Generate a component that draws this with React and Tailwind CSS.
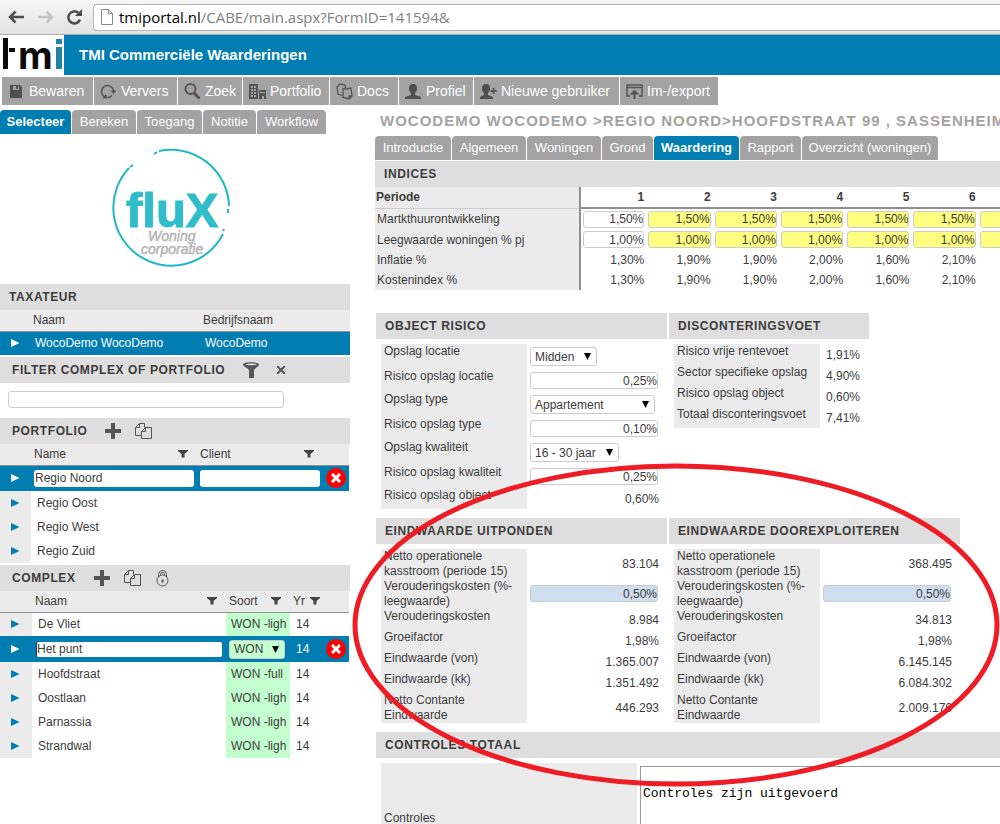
import React, { useState } from 'react';

const toolbarItems = [
  { label: 'Bewaren', icon: 'save', width: 'w-[91px]' },
  { label: 'Ververs', icon: 'refresh', width: 'w-[83px]' },
  { label: 'Zoek', icon: 'search', width: 'w-[64px]' },
  { label: 'Portfolio', icon: 'building', width: 'w-[86px]' },
  { label: 'Docs', icon: 'docs', width: 'w-[68px]' },
  { label: 'Profiel', icon: 'user', width: 'w-[74px]' },
  { label: 'Nieuwe gebruiker', icon: 'userAdd', width: 'w-[145px]' },
  { label: 'Im-/export', icon: 'export', width: 'w-[98px]' },
];

const leftTabs = [
  { label: 'Selecteer', width: 'w-[71px]' },
  { label: 'Bereken', width: 'w-[64px]' },
  { label: 'Toegang', width: 'w-[65px]' },
  { label: 'Notitie', width: 'w-[53px]' },
  { label: 'Workflow', width: 'w-[69px]' },
];

const mainTabs = [
  { label: 'Introductie', width: 'w-[76px]' },
  { label: 'Algemeen', width: 'w-[74px]' },
  { label: 'Woningen', width: 'w-[74px]' },
  { label: 'Grond', width: 'w-[51px]' },
  { label: 'Waardering', width: 'w-[85px]' },
  { label: 'Rapport', width: 'w-[61px]' },
  { label: 'Overzicht (woningen)', width: 'w-[136px]' },
];

const indices = [
  { label: 'Martkthuurontwikkeling', editable: true, values: ['1,50%', '1,50%', '1,50%', '1,50%', '1,50%', '1,50%', ''] },
  { label: 'Leegwaarde woningen % pj', editable: true, values: ['1,00%', '1,00%', '1,00%', '1,00%', '1,00%', '1,00%', ''] },
  { label: 'Inflatie %', values: ['1,30%', '1,90%', '1,90%', '2,00%', '1,60%', '2,10%', ''] },
  { label: 'Kostenindex %', values: ['1,30%', '1,90%', '1,90%', '2,00%', '1,60%', '2,10%', ''] },
];

const complexes = [
  { name: 'De Vliet', soort: 'WON -ligh' },
  { name: 'Het punt', soort: 'WON', selected: true },
  { name: 'Hoofdstraat', soort: 'WON -full' },
  { name: 'Oostlaan', soort: 'WON -ligh' },
  { name: 'Parnassia', soort: 'WON -ligh' },
  { name: 'Strandwal', soort: 'WON -ligh' },
];

const disconto = [
  ['Risico vrije rentevoet', '1,91%'],
  ['Sector specifieke opslag', '4,90%'],
  ['Risico opslag object', '0,60%'],
  ['Totaal disconteringsvoet', '7,41%'],
];

const uitponden = ['83.104', '0,50%', '8.984', '1,98%', '1.365.007', '1.351.492', '446.293'];
const doorexploiteren = ['368.495', '0,50%', '34.813', '1,98%', '6.145.145', '6.084.302', '2.009.176'];
const eindwaardeLabels = [
  'Netto operationele kasstroom (periode 15)',
  'Verouderingskosten (%-leegwaarde)',
  'Verouderingskosten',
  'Groeifactor',
  'Eindwaarde (von)',
  'Eindwaarde (kk)',
  'Netto Contante Eindwaarde',
];

const ToolIcon = ({ name }) => (
  <svg width="18" height="18" viewBox="0 0 18 18" fill="none" stroke="#555" strokeWidth="1.5" className="shrink-0" aria-hidden="true">
    {name === 'save' && (
      <g stroke="none">
        <path d="M3 3h10l2 2v11H3z" fill="#4f4f4f" />
        <path d="M6 4h6v4H6z" fill="#a3a3a3" />
        <path d="M9 4h2v3H9z" fill="#4f4f4f" />
      </g>
    )}
    {name === 'refresh' && (
      <g>
        <path d="M6 15A6 6 0 1 1 14.500 9M8.500 15.500A6 6 0 0 0 13 13.500" />
        <path d="M11.500 8.500h6L14.500 12zM3.500 16.500h5L7 12z" fill="#555" stroke="none" />
      </g>
    )}
    {name === 'search' && (
      <g>
        <circle cx="7.500" cy="7" r="5" strokeWidth="2" />
        <path d="M11 11l5.500 5.500" strokeWidth="3" />
      </g>
    )}
    {name === 'building' && (
      <g stroke="none">
        <path d="M1 2h9v15H1zM11 8h7v9h-2v-3h-2v3h-3z" fill="#555" />
        <path d="M3 4h2v2H3zM6 4h2v2H6zM3 7h2v2H3zM6 7h2v2H6zM3 10h2v2H3zM6 10h2v2H6zM3 13h2v2H3zM6 13h2v2H6zM12 10h5v1h-5z" fill="#a3a3a3" />
      </g>
    )}
    {name === 'docs' && (
      <g strokeWidth="1.300">
        <path d="M7.500 13.500L3 12 2 5l3-3 5 1 .5 3" />
        <path d="M8 6.500l3 .5 5-1 1 8-3 3-6-1.500zM14 17v-3h3" />
      </g>
    )}
    {name === 'user' && (
      <path d="M9 2c3 0 4 2 4 4.500 0 2-1 3.500-2 4.500v2l6 2v2H1v-2l6-2v-2c-1-1-2-2.500-2-4.500C5 4 6 2 9 2z" fill="#4f4f4f" stroke="none" />
    )}
    {name === 'userAdd' && (
      <g>
        <path d="M7 2c3 0 4 2 4 4.500 0 2-1 3.500-2 4.500v2l5 2v2H1v-2l4-2v-2c-1-1-2-2.500-2-4.500C3 4 4 2 7 2z" fill="#4f4f4f" stroke="none" />
        <path d="M14.500 6v6M11.500 9h6" strokeWidth="2" />
      </g>
    )}
    {name === 'export' && (
      <g>
        <path d="M5 14H2V3h15v11h-3M2 5.500h15" />
        <path d="M9.500 17v-8M7 11.500L9.500 9l2.500 2.500z" strokeWidth="2" />
      </g>
    )}
  </svg>
);

const Triangle = ({ selected }) => (
  <svg width="9" height="8" viewBox="0 0 9 8" aria-hidden="true" className={`ml-[11px] ${selected ? 'text-white' : 'text-[#007db1]'}`}>
    <path d="M0 0l8.500 4L0 8z" fill="currentColor" />
  </svg>
);

const FilterGlyph = () => (
  <svg width="10" height="8" viewBox="0 0 10 8" aria-hidden="true">
    <path d="M0 0h10v1L6.500 4v3.500h-3V4L0 1z" fill="#444" />
  </svg>
);

const PlusIcon = () => (
  <svg width="16" height="16" viewBox="0 0 16 16" aria-hidden="true">
    <path d="M6 0h4v6h6v4h-6v6H6v-6H0V6h6z" fill="#555" />
  </svg>
);

const CopyIcon = () => (
  <svg width="17" height="17" viewBox="0 0 17 17" fill="none" stroke="#555" aria-hidden="true">
    <path d="M6.500 12.500h-6v-8l4-4h5v4M4.500 .5v4h-4" />
    <path d="M10.500 4.500h6v11h-10v-7zM10.500 4.500v4h-4" />
  </svg>
);

const LockIcon = () => (
  <svg width="13" height="17" viewBox="0 0 13 17" fill="none" stroke="#555" aria-hidden="true">
    <circle cx="6.500" cy="10.500" r="5.500" />
    <path d="M2.500 7V4.500a4 4 0 0 1 8 0V7M4.500 5.500v-1a2 2 0 0 1 4 0v1" />
    <path d="M6.500 9.500v3" strokeWidth="2" />
  </svg>
);

const DeleteButton = ({ label }) => (
  <button type="button" aria-label={label} className="flex size-5 items-center justify-center rounded-full bg-[#ff0000]">
    <svg width="10" height="10" viewBox="0 0 10 10" stroke="#fff" strokeWidth="3" aria-hidden="true">
      <path d="M1 1l8 8M9 1L1 9" />
    </svg>
  </button>
);

const Heading = ({ children, className = 'pl-[9px]' }) => (
  <h2 className={`flex h-[26px] items-center bg-[#dedede] text-xs font-bold uppercase tracking-wider text-[#3c3c3c] ${className}`}>
    {children}
  </h2>
);

const Tabs = ({ items, active, onSelect }) => (
  <div role="tablist" className="flex gap-px">
    {items.map(tab => (
      <button
        key={tab.label}
        type="button"
        role="tab"
        aria-selected={active === tab.label}
        onClick={() => onSelect(tab.label)}
        className={`h-6 shrink-0 whitespace-nowrap rounded-t text-center text-[13px] text-white ${tab.width} ${active === tab.label ? 'bg-[#007db1] font-bold' : 'bg-[#a3a3a3]'}`}
      >
        {tab.label}
      </button>
    ))}
  </div>
);

const SelectBox = ({ id, label, value, width, options, className = 'bg-white' }) => (
  <div className={`relative ${width}`}>
    <select
      id={id}
      aria-label={label}
      defaultValue={value}
      className={`block h-[19px] w-full appearance-none rounded-[3px] border border-[#ccc] pl-1 text-xs leading-4 ${className}`}
    >
      {options.map(o => <option key={o}>{o}</option>)}
    </select>
    <svg width="7" height="7" viewBox="0 0 7 7" className="pointer-events-none absolute right-[6px] top-[6px]" aria-hidden="true">
      <path d="M0 0h7L3.500 7z" fill="#000" />
    </svg>
  </div>
);

const PercentInput = ({ id, value, className = 'bg-white' }) => (
  <input id={id} defaultValue={value} className={`block h-[17px] w-32 rounded-[3px] border border-[#ccc] text-right text-xs ${className}`} />
);

const Row = ({ id, label, height, children }) => (
  <div className={`flex ${height}`}>
    <label htmlFor={id} className="w-[146px] shrink-0 bg-[#ebebeb] pl-[3px] leading-[15px]">{label}</label>
    {children}
  </div>
);

const BrowserBar = () => (
  <div className="flex h-[35px] items-center border-b border-[#aaa] bg-gradient-to-b from-[#f7f7f7] to-[#e2e2e2]">
    <button type="button" aria-label="Back" className="ml-2">
      <svg width="17" height="14" viewBox="0 0 17 14" fill="none" stroke="#4d4d4d" strokeWidth="2.500">
        <path d="M2 7h14M7.500 1.500L2 7l5.500 5.500" />
      </svg>
    </button>
    <button type="button" aria-label="Forward" className="ml-3">
      <svg width="17" height="14" viewBox="0 0 17 14" fill="none" stroke="#c3c3c3" strokeWidth="2.500">
        <path d="M1 7h14M9.500 1.500L15 7l-5.500 5.500" />
      </svg>
    </button>
    <button type="button" aria-label="Reload" className="ml-3">
      <svg width="17" height="16" viewBox="0 0 17 16" fill="none" stroke="#4d4d4d" strokeWidth="2.500">
        <path d="M14 10.500A6 6 0 1 1 12.500 4" />
        <path d="M16 0v7H9z" fill="#4d4d4d" stroke="none" />
      </svg>
    </button>
    <div className="ml-[10px] flex h-[27px] flex-1 items-center rounded-l border border-r-0 border-[#b5b5b5] bg-white pl-[7px] font-['Open_Sans',sans-serif] text-[15px]">
      <svg width="12" height="16" viewBox="0 0 12 16" fill="none" stroke="#888" aria-hidden="true">
        <path d="M.5 .5h7l4 4v11H.5zM7.500 .5v4h4" />
      </svg>
      <span className="ml-[6px] text-black">tmiportal.nl</span>
      <span className="text-[#808080]">/CABE/main.aspx?FormID=141594&amp;</span>
    </div>
  </div>
);

const TmiLogo = () => (
  <svg width="64" height="40" viewBox="0 0 64 40" className="shrink-0 bg-white" role="img" aria-label="tmi">
    <path d="M3 3h5v31H3zM9 13h6v4H9z" fill="#0a0a0a" />
    <text x="18" y="34" fontFamily="Inter, sans-serif" fontSize="38" fontWeight="700" fill="#0a0a0a">m</text>
    <path d="M56 4h6v5h-6zM56 12h6v22h-6z" fill="#2181a6" />
  </svg>
);

const FluxLogo = () => (
  <svg width="120" height="120" viewBox="0 0 120 120" role="img" aria-label="fluX Woningcorporatie" className="mt-[14px]">
    <g fill="none" stroke="#22b8c6" strokeWidth="2">
      <path d="M48 3A58 58 0 0 1 118 58" />
      <path d="M112 86A58 58 0 1 1 18 20" />
      <path d="M43 6l3-2M19 19l3-2M117 61v4M112 83l1-2" />
    </g>
    <text x="15" y="79" fontFamily="Liberation Sans, sans-serif" fontSize="49" fontWeight="700" fill="#30bdc9" stroke="#30bdc9" strokeWidth="1">fluX</text>
    <g fontFamily="Liberation Sans, sans-serif" fontSize="14" fontStyle="italic" fill="#b5b5b5" stroke="#b5b5b5" strokeWidth=".5">
      <text x="37" y="93">Woning</text>
      <text x="30" y="106">corporatie</text>
    </g>
  </svg>
);

const Eindwaarde = ({ title, prefix, values }) => (
  <section className="w-[291px]">
    <Heading>{title}</Heading>
    <div className="pl-[5px] pt-[5px]">
      {eindwaardeLabels.map((label, i) => (
        <Row key={label} id={`${prefix}-${i}`} label={label} height={i < 2 || i === 6 ? 'h-[30px]' : 'h-[21px]'}>
          {i === 1 ? (
            <div className="pl-[3px] pt-[6px]"><PercentInput id={`${prefix}-${i}`} value={values[i]} className="bg-[#cfdeef]" /></div>
          ) : (
            <output id={`${prefix}-${i}`} className="flex flex-1 items-center justify-end pr-2">{values[i]}</output>
          )}
        </Row>
      ))}
    </div>
  </section>
);

const Sidebar = () => {
  const [tab, setTab] = useState('Selecteer');

  return (
    <aside className="w-[350px] shrink-0 pt-[5px]">
      <Tabs items={leftTabs} active={tab} onSelect={setTab} />
      <div className="flex h-[150px] justify-center pr-2"><FluxLogo /></div>

      <Heading>Taxateur</Heading>
      <table className="w-full table-fixed text-left">
        <colgroup><col className="w-[31px]" /><col className="w-[170px]" /><col /></colgroup>
        <thead>
          <tr className="h-[21px] border-b border-[#8f8f8f] bg-[#ebebeb]">
            <th />
            <th className="pl-[2px] font-normal">Naam</th>
            <th className="pl-[2px] font-normal">Bedrijfsnaam</th>
          </tr>
        </thead>
        <tbody>
          <tr className="h-6 bg-[#007db1] text-white">
            <td><Triangle selected /></td>
            <td className="pl-1">WocoDemo WocoDemo</td>
            <td className="pl-1">WocoDemo</td>
          </tr>
        </tbody>
      </table>

      <Heading className="mt-[2px] pl-3">
        <label htmlFor="filter">Filter complex of portfolio</label>
        <button type="button" aria-label="Filter" className="ml-[18px]">
          <svg width="16" height="16" viewBox="0 0 16 16" aria-hidden="true">
            <path d="M0 2.500C0-.5 16-.5 16 2.500c0 2-5 4-5 6V16H6V8.500C6 6.500 0 4.500 0 2.500z" fill="#555" />
            <path d="M2 2.500c2-1.500 10-1.500 12 0-2 1-10 1-12 0z" fill="#dedede" />
          </svg>
        </button>
        <button type="button" aria-label="Clear filter" className="ml-[18px]">
          <svg width="8" height="8" viewBox="0 0 8 8" stroke="#555" strokeWidth="2" aria-hidden="true"><path d="M0 0l8 8M8 0L0 8" /></svg>
        </button>
      </Heading>
      <div className="h-[35px] pl-2 pt-2">
        <input id="filter" className="block h-[17px] w-[276px] rounded-[3px] border border-[#ccc] px-1" />
      </div>

      <Heading className="pl-3">
        Portfolio
        <button type="button" aria-label="Add portfolio" className="ml-[18px]"><PlusIcon /></button>
        <button type="button" aria-label="Copy portfolio" className="ml-[14px]"><CopyIcon /></button>
      </Heading>
      <table className="w-[349px] table-fixed text-left">
        <colgroup><col className="w-[31px]" /><col className="w-[166px]" /><col className="w-[126px]" /><col /></colgroup>
        <thead>
          <tr className="h-[21px] border-b border-[#8f8f8f] bg-[#ebebeb]">
            <th />
            <th className="pl-[3px] font-normal"><div className="flex items-center justify-between pr-[9px]">Name <FilterGlyph /></div></th>
            <th className="pl-[3px] font-normal"><div className="flex items-center justify-between pr-[9px]">Client <FilterGlyph /></div></th>
            <th />
          </tr>
        </thead>
        <tbody>
          <tr className="h-[26px] bg-[#007db1]">
            <td><Triangle selected /></td>
            <td className="pl-[3px]"><input aria-label="Name" defaultValue="Regio Noord" className="block h-[17px] w-40 rounded-[3px] bg-white pl-px" /></td>
            <td className="pl-[3px]"><input aria-label="Client" className="block h-[17px] w-[120px] rounded-[3px] bg-white pl-px" /></td>
            <td className="pl-[3px]"><DeleteButton label="Delete Regio Noord" /></td>
          </tr>
          {['Regio Oost', 'Regio West', 'Regio Zuid'].map(name => (
            <tr key={name} className="h-6">
              <td className="bg-[#ebebeb]"><Triangle /></td>
              <td className="pl-[6px]">{name}</td>
              <td />
              <td />
            </tr>
          ))}
        </tbody>
      </table>

      <Heading className="mt-[2px] pl-3">
        Complex
        <button type="button" aria-label="Add complex" className="ml-[18px]"><PlusIcon /></button>
        <button type="button" aria-label="Copy complex" className="ml-[14px]"><CopyIcon /></button>
        <button type="button" aria-label="Lock complex" className="ml-[15px]"><LockIcon /></button>
      </Heading>
      <table className="w-[349px] table-fixed text-left">
        <colgroup><col className="w-8" /><col className="w-[194px]" /><col className="w-16" /><col className="w-[33px]" /><col /></colgroup>
        <thead>
          <tr className="h-[21px] border-b border-[#8f8f8f] bg-[#ebebeb]">
            <th />
            <th className="pl-[3px] font-normal"><div className="flex items-center justify-between pr-[9px]">Naam <FilterGlyph /></div></th>
            <th className="pl-[3px] font-normal"><div className="flex items-center justify-between pr-[9px]">Soort <FilterGlyph /></div></th>
            <th className="pl-[3px] font-normal"><div className="flex items-center justify-between pr-[3px]">Yr <FilterGlyph /></div></th>
            <th />
          </tr>
        </thead>
        <tbody>
          {complexes.map(c => c.selected ? (
            <tr key={c.name} className="h-[26px] bg-[#007db1] text-white">
              <td><Triangle selected /></td>
              <td className="pl-1"><input aria-label="Naam" defaultValue={c.name} className="block h-[15px] w-[186px] rounded-[2px] border-l border-[#333] bg-white text-[#3c3c3c]" /></td>
              <td className="pl-[3px]"><SelectBox label="Soort" value={c.soort} width="w-14" options={['WON']} className="bg-[#c3ffcf] text-[#3c3c3c]" /></td>
              <td className="pl-[6px]">14</td>
              <td className="pl-[3px]"><DeleteButton label={`Delete ${c.name}`} /></td>
            </tr>
          ) : (
            <tr key={c.name} className="h-6">
              <td className="bg-[#ebebeb]"><Triangle /></td>
              <td className="pl-[6px]">{c.name}</td>
              <td className="whitespace-nowrap bg-[#c3ffcf] pl-[5px]">{c.soort}</td>
              <td className="pl-[6px]">14</td>
              <td />
            </tr>
          ))}
        </tbody>
      </table>
    </aside>
  );
};

const IndicesTable = () => (
  <div className="overflow-hidden">
    <table className="w-[669px] table-fixed">
      <colgroup><col className="w-[205px]" /></colgroup>
      <thead>
        <tr className="h-[21px]">
          <th className="border-b border-r-2 border-b-[#ccc] border-r-[#8f8f8f] bg-[#ebebeb] pl-px text-left">Periode</th>
          {[1, 2, 3, 4, 5, 6].map(n => <th key={n} className="border-b-2 border-[#8f8f8f] pr-[2px] text-right">{n}</th>)}
          <th className="border-b-2 border-[#8f8f8f]" />
        </tr>
      </thead>
      <tbody>
        {indices.map(row => (
          <tr key={row.label} className={row.editable ? 'h-[21px]' : 'h-5'}>
            <th className="border-r-2 border-[#8f8f8f] bg-[#ebebeb] pl-[2px] text-left font-normal">{row.label}</th>
            {row.values.map((value, i) => (
              <td key={i} className={row.editable ? 'px-[2px]' : 'pr-[2px] text-right'}>
                {row.editable ? (
                  <input
                    aria-label={`${row.label} ${i + 1}`}
                    defaultValue={value}
                    className={`block h-[17px] w-full rounded-[3px] border border-[#ccc] text-right ${i === 0 ? 'bg-white' : 'bg-[#ffff80]'}`}
                  />
                ) : value}
              </td>
            ))}
          </tr>
        ))}
      </tbody>
    </table>
  </div>
);

const ObjectRisico = () => (
  <section className="w-[291px]">
    <Heading>Object risico</Heading>
    <div className="pl-[5px] pt-[5px]">
      <Row id="locatie" label="Opslag locatie" height="h-[25px]">
        <div className="pl-[3px] pt-[3px]"><SelectBox id="locatie" value="Midden" width="w-[67px]" options={['Midden']} /></div>
      </Row>
      <Row id="r-locatie" label="Risico opslag locatie" height="h-[23px]">
        <div className="pl-[3px] pt-[3px]"><PercentInput id="r-locatie" value="0,25%" /></div>
      </Row>
      <Row id="type" label="Opslag type" height="h-[25px]">
        <div className="pl-[3px] pt-[3px]"><SelectBox id="type" value="Appartement" width="w-[125px]" options={['Appartement']} /></div>
      </Row>
      <Row id="r-type" label="Risico opslag type" height="h-[23px]">
        <div className="pl-[3px] pt-[3px]"><PercentInput id="r-type" value="0,10%" /></div>
      </Row>
      <Row id="kwaliteit" label="Opslag kwaliteit" height="h-[25px]">
        <div className="pl-[3px] pt-[3px]"><SelectBox id="kwaliteit" value="16 - 30 jaar" width="w-[89px]" options={['16 - 30 jaar']} /></div>
      </Row>
      <Row id="r-kwaliteit" label="Risico opslag kwaliteit" height="h-[23px]">
        <div className="pl-[3px] pt-[3px]"><PercentInput id="r-kwaliteit" value="0,25%" /></div>
      </Row>
      <Row id="r-object" label="Risico opslag object" height="h-[21px]">
        <output id="r-object" className="flex flex-1 items-center justify-end pr-2">0,60%</output>
      </Row>
    </div>
  </section>
);

const App = () => {
  const [tab, setTab] = useState('Waardering');

  return (
    <div className="relative h-screen overflow-hidden bg-white font-['Liberation_Sans',Arial,sans-serif] text-xs text-[#3c3c3c]">
      <BrowserBar />
      <header className="flex h-10 items-center bg-[#007db1]">
        <TmiLogo />
        <h1 className="ml-[15px] text-[15px] font-bold text-white">TMI Commerciële Waarderingen</h1>
      </header>
      <nav className="flex gap-px pl-[2px] pt-[2px]">
        {toolbarItems.map(item => (
          <button key={item.label} type="button" className={`flex h-7 shrink-0 items-center gap-1 whitespace-nowrap bg-[#a3a3a3] pl-[5px] text-sm text-white ${item.width}`}>
            <ToolIcon name={item.icon} />
            {item.label}
          </button>
        ))}
      </nav>

      <div className="flex">
        <Sidebar />
        <main className="min-w-0 flex-1 pl-[25px]">
          <p className="h-[31px] overflow-hidden whitespace-nowrap pl-[5px] pt-[4px] text-[15px] font-bold uppercase leading-6 tracking-[1px] text-[#a3a3a3]">
            WocoDemo WocoDemo &gt;Regio Noord&gt;Hoofdstraat 99 , Sassenheim
          </p>
          <Tabs items={mainTabs} active={tab} onSelect={setTab} />

          <Heading className="mt-px pl-[9px]">Indices</Heading>
          <IndicesTable />

          <div className="mt-[23px] flex gap-[2px] pl-px">
            <ObjectRisico />
            <section className="w-[200px]">
              <Heading>Disconteringsvoet</Heading>
              <div className="pl-[5px] pt-[5px]">
                {disconto.map(([label, value], i) => (
                  <Row key={label} id={`disc-${i}`} label={label} height="h-[21px]">
                    <output id={`disc-${i}`} className="flex items-center pl-[6px]">{value}</output>
                  </Row>
                ))}
              </div>
            </section>
          </div>

          <div className="mt-[9px] flex gap-[2px] pl-px">
            <Eindwaarde title="Eindwaarde uitponden" prefix="uit" values={uitponden} />
            <Eindwaarde title="Eindwaarde doorexploiteren" prefix="door" values={doorexploiteren} />
          </div>

          <section className="mt-[9px] pl-px">
            <Heading>Controles totaal</Heading>
            <div className="flex pl-[5px] pt-[5px]">
              <label htmlFor="controles" className="flex h-[110px] w-64 shrink-0 items-center bg-[#ebebeb] pl-[3px]">Controles</label>
              <textarea
                id="controles"
                defaultValue={'\nControles zijn uitgevoerd'}
                className="ml-[3px] mt-[3px] h-[104px] min-w-0 flex-1 resize-none border border-r-0 border-[#999] px-[2px] pt-1 font-['Liberation_Mono',monospace] text-[13px] leading-[15px] text-black"
              />
            </div>
          </section>
        </main>
      </div>

      {/* red marker around the end values */}
      <svg width="648" height="324" viewBox="0 0 648 324" className="pointer-events-none absolute left-[352px] top-[463px]" fill="none" aria-hidden="true">
        <ellipse cx="324" cy="162" rx="321" ry="159" stroke="#ee1c24" strokeWidth="5" />
      </svg>
    </div>
  );
};

export default App;
